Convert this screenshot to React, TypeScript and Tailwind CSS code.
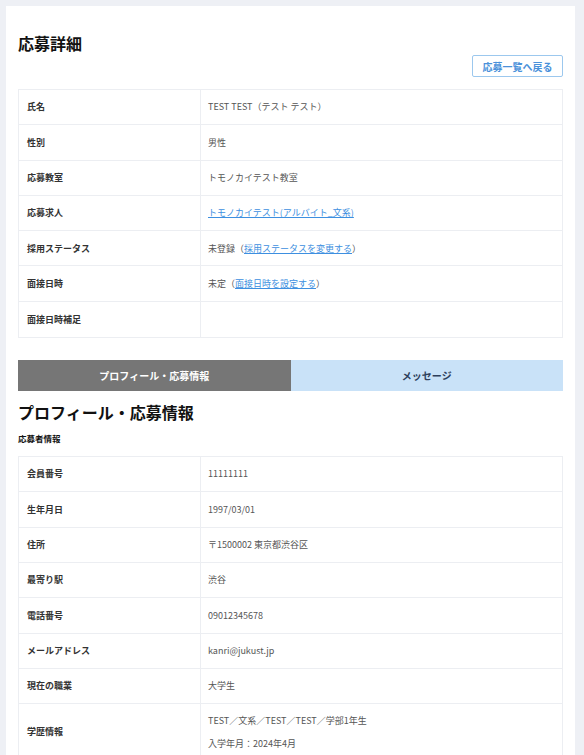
import React from "react";

const font = { fontFamily: '"Noto Sans CJK JP", "Noto Sans", sans-serif' };

type Row = { label: string; value: React.ReactNode; tall?: boolean };

function InfoTable({ rows }: { rows: Row[] }) {
    return (
        <div className="border border-[#eceef2]">
            {rows.map((r, i) => (
                <div
                    key={i}
                    className={`flex ${i < rows.length - 1 ? "border-b border-[#eceef2]" : ""} ${r.tall ? "" : "h-[35.3px]"}`}
                >
                    <div className="w-[182px] shrink-0 flex items-center pl-2 text-[9px] font-bold text-[#333] border-r border-[#eceef2]">
                        {r.label}
                    </div>
                    <div className={`flex-1 pl-[7px] text-[9px] text-[#555] ${r.tall ? "py-[5px] leading-[23px]" : "flex items-center"}`}>
                        {r.value}
                    </div>
                </div>
            ))}
        </div>
    );
}

const Link = ({ children }: { children: React.ReactNode }) => (
    <a href="#" className="text-[#3d8fe0] underline underline-offset-[1px]">
        {children}
    </a>
);

export default function App() {
    const detailRows: Row[] = [
        { label: "氏名", value: "TEST TEST（テスト テスト）" },
        { label: "性別", value: "男性" },
        { label: "応募教室", value: "トモノカイテスト教室" },
        { label: "応募求人", value: <Link>トモノカイテスト(アルバイト_文系)</Link> },
        {
            label: "採用ステータス",
            value: (
                <span>
                    未登録（<Link>採用ステータスを変更する</Link>）
                </span>
            ),
        },
        {
            label: "面接日時",
            value: (
                <span>
                    未定（<Link>面接日時を設定する</Link>）
                </span>
            ),
        },
        { label: "面接日時補足", value: "" },
    ];

    const profileRows: Row[] = [
        { label: "会員番号", value: "11111111" },
        { label: "生年月日", value: "1997/03/01" },
        { label: "住所", value: "〒1500002 東京都渋谷区" },
        { label: "最寄り駅", value: "渋谷" },
        { label: "電話番号", value: "09012345678" },
        { label: "メールアドレス", value: "kanri@jukust.jp" },
        { label: "現在の職業", value: "大学生" },
        {
            label: "学歴情報",
            tall: true,
            value: (
                <div>
                    <div>TEST／文系／TEST／TEST／学部1年生</div>
                    <div>入学年月：2024年4月</div>
                </div>
            ),
        },
    ];

    return (
        <div className="min-h-[755px] bg-[#eef0f5] pt-[6px] pl-[6px] pr-[9px]" style={font}>
            <div className="bg-white px-3 pt-[25px] pb-10">
                <h1 className="text-[16px] leading-[24px] font-bold text-[#111]">応募詳細</h1>
                <div className="flex justify-end">
                    <button className="w-[91px] h-[22px] border border-[#9cc8ee] rounded-[2px] text-[10px] font-bold text-[#4a91da] bg-white">
                        応募一覧へ戻る
                    </button>
                </div>
                <div className="mt-[12px]">
                    <InfoTable rows={detailRows} />
                </div>

                <div className="mt-[22px] flex h-[31px] text-[10px] font-bold">
                    <div className="flex-1 bg-[#767676] text-white flex items-center justify-center">
                        プロフィール・応募情報
                    </div>
                    <div className="flex-1 bg-[#c9e2f8] text-[#2d3f5c] flex items-center justify-center">
                        メッセージ
                    </div>
                </div>

                <h2 className="mt-[9px] text-[16px] leading-[24px] font-bold text-[#111]">プロフィール・応募情報</h2>
                <h3 className="mt-[8px] text-[8.5px] leading-[12px] font-bold text-[#111]">応募者情報</h3>
                <div className="mt-[12px]">
                    <InfoTable rows={profileRows} />
                </div>
            </div>
        </div>
    );
}
